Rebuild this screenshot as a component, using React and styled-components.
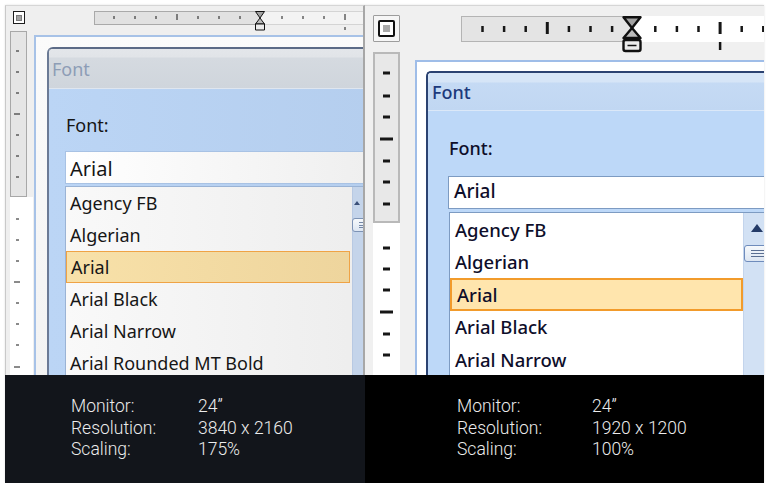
import React from "react";
import styled, { createGlobalStyle } from "styled-components";

const GlobalStyle = createGlobalStyle`
  html, body {
    margin: 0;
    padding: 0;
    background: #ffffff;
  }
  body {
    font-family: "Noto Sans", "Open Sans", "DejaVu Sans", sans-serif;
  }
`;

// two screenshots of the same Word font dialog: 4k @175% and 1920 @100%
const HI = {
  key: "hi",
  panelW: 360,
  borderLeft: "1px solid #c9c9c9",
  borderRight: "2px solid #a7a7a7",
  viewBg: "#efefef",
  padLeft: 4,
  padTop: 5,
  barH: 25,
  cornerCol: 17,
  rulerGap: 1,
  hr: {
    ml: 67, mt: 0, width: 300, height: 14, split: 166,
    first: 20, step: 21, count: 13, skip: 7, tall: [3, 11], below: 11,
    shortY: [5, 8], tallY: [3, 9], belowY: [16, 19], w: 1, tallW: 1,
    hour: { w: 9, y1: 7, y2: 13, r0: 13, r1: 19, sw: 1, bar: false },
    gray: "#e1e1e1", grayStroke: "#a9a9a9", light: "#f3f3f3", lightStroke: "#d4d4d4",
  },
  vr: {
    width: 23, grayW: 17, grayH: 166, height: 360,
    top: [20, 41, 62, 83, 104, 125, 146], topLong: [83],
    bot: [22, 43, 64, 85, 106, 127, 148, 170], botLong: [85, 170],
    short: [6, 9], long: [4, 10], sw: 1,
    gray: "#e5e5e5", grayStroke: "#a8a8a8", bw: 1,
  },
  docMt: 4,
  docBorder: "#a7c2e7",
  docBg: "linear-gradient(180deg, #fbfbfb 0%, #f1f1f1 100%)",
  dlgMl: 11,
  dlgMt: 10,
  caption: { bg: "#12151b", pad: 66, col: 127 },
};

const LO = {
  key: "lo",
  panelW: 399,
  borderLeft: "none",
  borderRight: "none",
  viewBg: "#f0f0f0",
  padLeft: 8,
  padTop: 9,
  barH: 46,
  cornerCol: 27,
  rulerGap: 15,
  hr: {
    ml: 61, mt: 1, width: 320, height: 26, split: 171,
    first: 21.5, step: 21.6, count: 14, skip: 7, tall: [3, 11], below: 11,
    shortY: [10, 16], tallY: [6, 18], belowY: [26, 34], w: 2.5, tallW: 3,
    hour: { w: 17, y1: 12, y2: 22, r0: 24, r1: 35, sw: 2.4, bar: true },
    gray: "#e4e4e4", grayStroke: "#b4b4b4", light: "#ffffff", lightStroke: "#ffffff",
  },
  vr: {
    width: 27, grayW: 27, grayH: 171, height: 360,
    top: [21, 44, 65, 87, 109, 130, 152], topLong: [87],
    bot: [25, 46, 67, 89, 111, 132], botLong: [89],
    short: [10, 17], long: [7, 20], sw: 3,
    gray: "#e8e8e8", grayStroke: "#b9b9b9", bw: 2,
  },
  docMt: 8,
  docBorder: "#9fbde8",
  docBg: "#ffffff",
  dlgMl: 9,
  dlgMt: 9,
  caption: { bg: "#000000", pad: 92, col: 135 },
};

const FONTS = ["Agency FB", "Algerian", "Arial", "Arial Black", "Arial Narrow", "Arial Rounded MT Bold"];

const Frame = styled.div`
  display: flex;
  margin: 5px 0 0 5px;
  width: 759px;
  height: 478px;
  box-shadow: 0 0 2px rgba(0, 0, 0, 0.12);
`;

const Panel = styled.div`
  width: ${(p) => p.$v.panelW}px;
  flex: none;
  display: flex;
  flex-direction: column;
  overflow: hidden;
`;

const Viewport = styled.div`
  flex: 1;
  min-height: 0;
  overflow: hidden;
  background: ${(p) => p.$v.viewBg};
  border-top: 1px solid #d6d6d6;
  border-left: ${(p) => p.$v.borderLeft};
  border-right: ${(p) => p.$v.borderRight};
  padding-left: ${(p) => p.$v.padLeft}px;
`;

const TopBar = styled.div`
  height: ${(p) => p.$v.barH}px;
  box-sizing: border-box;
  padding-top: ${(p) => p.$v.padTop}px;
  display: flex;
  align-items: flex-start;
`;

const CornerCell = styled.div`
  width: ${(p) => p.$v.cornerCol}px;
  flex: none;
  display: flex;
  justify-content: center;
`;

const CornerHi = styled.div`
  width: 12px;
  height: 13px;
  box-sizing: border-box;
  border: 1px solid #1d1d1d;
  background: #ffffff;
  display: grid;
  place-items: center;
`;

const CornerLo = styled.div`
  width: 27px;
  height: 27px;
  box-sizing: border-box;
  border: 1px solid #9d9d9d;
  border-radius: 1px;
  background: #f6f6f6;
  display: grid;
  place-items: center;
`;

const CornerKnob = styled.div`
  width: ${(p) => (p.$lo ? 17 : 6)}px;
  height: ${(p) => (p.$lo ? 17 : 6)}px;
  box-sizing: border-box;
  border: ${(p) => (p.$lo ? "2.5px solid #111" : "1px solid #7a7a7a")};
  border-radius: ${(p) => (p.$lo ? 2 : 0)}px;
  background: ${(p) => (p.$lo ? "#ffffff" : "#a2a2a2")};
  display: grid;
  place-items: center;
`;

const CornerDot = styled.div`
  width: 7px;
  height: 7px;
  background: #a9a9a9;
`;

const RulerSvg = styled.svg`
  display: block;
  flex: none;
  overflow: visible;
  margin-left: ${(p) => p.$ml || 0}px;
  margin-top: ${(p) => p.$mt || 0}px;
`;

const Body = styled.div`
  display: flex;
  align-items: flex-start;
  gap: ${(p) => p.$v.rulerGap}px;
`;

const Doc = styled.div`
  flex: none;
  width: 440px;
  height: 400px;
  margin-top: ${(p) => p.$v.docMt}px;
  border-left: 2px solid ${(p) => p.$v.docBorder};
  border-top: 2px solid ${(p) => p.$v.docBorder};
  background: ${(p) => p.$v.docBg};
  padding: ${(p) => p.$v.dlgMt}px 0 0 ${(p) => p.$v.dlgMl}px;
`;

const Dialog = styled.div`
  width: 420px;
  border-left: 2px solid ${(p) => (p.$lo ? "#2b4271" : "#6b7a95")};
  border-top: 2px solid ${(p) => (p.$lo ? "#2b4271" : "#5c6b87")};
  border-top-left-radius: ${(p) => (p.$lo ? 5 : 6)}px;
  overflow: hidden;
`;

const TitleBar = styled.div`
  height: ${(p) => (p.$lo ? 37 : 39)}px;
  display: flex;
  align-items: center;
  padding-left: ${(p) => (p.$lo ? 4 : 3)}px;
  font-size: 18px;
  color: ${(p) => (p.$lo ? "#1c3a7c" : "#8d9db6")};
  font-weight: ${(p) => (p.$lo ? 500 : 400)};
  border-bottom: 1px solid ${(p) => (p.$lo ? "#dbe8f8" : "#dfe6ef")};
  background: ${(p) =>
    p.$lo
      ? "linear-gradient(180deg, #d6e5f7 0px, #d6e5f7 9px, #c5daf4 10px, #c1d7f2 100%)"
      : "linear-gradient(180deg, #e3e6ea 0px, #e1e4e8 8px, #d5dae0 9px, #cfd5dc 100%)"};
`;

const DialogBody = styled.div`
  height: 300px;
  padding: ${(p) => (p.$lo ? "24px 0 0 20px" : "23px 0 0 16px")};
  background: ${(p) =>
    p.$lo ? "#bdd8f8" : "linear-gradient(90deg, #bbd5f5 0%, #b3ccec 100%)"};
`;

const Label = styled.div`
  height: 26px;
  line-height: 26px;
  font-size: ${(p) => (p.$lo ? 18 : 18)}px;
  font-weight: ${(p) => (p.$lo ? 500 : 400)};
  color: ${(p) => (p.$lo ? "#0e0e2a" : "#161616")};
  padding-left: 1px;
`;

const Input = styled.div`
  margin-top: ${(p) => (p.$lo ? 15 : 13)}px;
  height: 33px;
  width: 360px;
  box-sizing: border-box;
  border: 1px solid ${(p) => (p.$lo ? "#7d9bc2" : "#a8c2e4")};
  background: ${(p) => (p.$lo ? "#ffffff" : "linear-gradient(90deg, #ffffff 0%, #ececec 100%)")};
  padding: ${(p) => (p.$lo ? "0 0 0 5px" : "2px 0 0 4px")};
  line-height: 29px;
  font-size: ${(p) => (p.$lo ? 19 : 20)}px;
  font-weight: ${(p) => (p.$lo ? 500 : 400)};
  color: ${(p) => (p.$lo ? "#0e0e2a" : "#161616")};
`;

const List = styled.div`
  margin-top: ${(p) => (p.$lo ? 3 : 2)}px;
  margin-left: ${(p) => (p.$lo ? 1 : 0)}px;
  display: flex;
  width: 360px;
  border: 1px solid ${(p) => (p.$lo ? "#7d9bc2" : "#9ab3d5")};
  background: ${(p) => (p.$lo ? "#ffffff" : "linear-gradient(90deg, #f9f9f9 0%, #ebebeb 100%)")};
`;

const Items = styled.div`
  width: ${(p) => (p.$lo ? 293 : 286)}px;
  flex: none;
`;

const Item = styled.div`
  height: ${(p) => (p.$lo ? 32.5 : 32)}px;
  box-sizing: border-box;
  margin-right: ${(p) => (p.$lo ? 0 : 2)}px;
  padding-left: ${(p) => (p.$lo ? 5 : 4)}px;
  display: flex;
  align-items: center;
  font-size: ${(p) => (p.$lo ? 18.5 : 18)}px;
  font-weight: ${(p) => (p.$lo ? 500 : 400)};
  color: ${(p) => (p.$lo ? "#0e0e2a" : "#161616")};
  white-space: nowrap;
  border: ${(p) =>
    p.$sel ? (p.$lo ? "2px solid #f29b2b" : "1px solid #efa345") : "none"};
  background: ${(p) =>
    p.$sel
      ? p.$lo
        ? "#ffe5ad"
        : "linear-gradient(90deg, #f8e1a9 0%, #eed59d 100%)"
      : "transparent"};
`;

const Scroll = styled.div`
  flex: 1;
  background: ${(p) => (p.$lo ? "#d2e1f4" : "#c4d4ea")};
  border-left: 1px solid ${(p) => (p.$lo ? "#c3d4ec" : "#b8c9e2")};
  display: flex;
  flex-direction: column;
  padding-top: ${(p) => (p.$lo ? 11 : 14)}px;
`;

const UpArrow = styled.div`
  width: 0;
  height: 0;
  margin-left: ${(p) => (p.$lo ? 7 : 1)}px;
  border-left: ${(p) => (p.$lo ? 6 : 3)}px solid transparent;
  border-right: ${(p) => (p.$lo ? 6 : 3)}px solid transparent;
  border-bottom: ${(p) => (p.$lo ? 8 : 4)}px solid ${(p) => (p.$lo ? "#243b68" : "#3a4f78")};
`;

const Thumb = styled.div`
  margin-top: 13px;
  margin-left: ${(p) => (p.$lo ? 0 : -1)}px;
  height: ${(p) => (p.$lo ? 17 : 14)}px;
  box-sizing: border-box;
  border: 1px solid ${(p) => (p.$lo ? "#6f8cbc" : "#7d93b5")};
  border-radius: 3px;
  background: linear-gradient(180deg, #f6f9fc 0%, #dde6f2 100%);
  display: flex;
  flex-direction: column;
  justify-content: center;
  gap: ${(p) => (p.$lo ? 2 : 1.5)}px;
  padding-left: 6px;
`;

const Grip = styled.div`
  height: 1px;
  background: ${(p) => (p.$lo ? "#5b6f92" : "#7487a6")};
`;

const Caption = styled.div`
  height: 108px;
  flex: none;
  box-sizing: border-box;
  background: ${(p) => p.$v.caption.bg};
  padding: 21px 0 0 ${(p) => p.$v.caption.pad}px;
  display: grid;
  grid-template-columns: ${(p) => p.$v.caption.col}px auto;
  align-content: start;
  font-family: Roboto, "Noto Sans", sans-serif;
  font-weight: 300;
  font-size: 17.5px;
  line-height: 21.5px;
  color: #ececec;
`;

function HRuler({ s }) {
  const marks = [];
  for (let i = 0; i < s.count; i++) {
    if (i === s.skip) continue;
    const x = s.first + s.step * i;
    const tall = s.tall.includes(i);
    const y = tall ? s.tallY : s.shortY;
    marks.push(
      <line key={i} x1={x} x2={x} y1={y[0]} y2={y[1]} stroke="#161616" strokeWidth={tall ? s.tallW : s.w} />
    );
    if (i === s.below) {
      marks.push(
        <line key={"b" + i} x1={x} x2={x} y1={s.belowY[0]} y2={s.belowY[1]} stroke="#161616" strokeWidth={s.w} />
      );
    }
  }
  const h = s.hour;
  const cx = s.split;
  const l = cx - h.w / 2;
  const r = cx + h.w / 2;
  return (
    <RulerSvg width={s.width} height={s.height} $ml={s.ml} $mt={s.mt}>
      <rect x={s.split} y={0.5} width={s.width - s.split} height={s.height - 1} fill={s.light} stroke={s.lightStroke} />
      <rect x={0.5} y={0.5} width={s.split} height={s.height - 1} fill={s.gray} stroke={s.grayStroke} />
      {marks}
      <g stroke="#111" strokeWidth={h.sw} strokeLinejoin="round">
        <path d={`M${l} ${h.sw / 2} L${r} ${h.sw / 2} L${cx} ${h.y1} Z`} fill="#a3a3a3" />
        <path d={`M${cx} ${h.y1} L${r} ${h.y2} L${l} ${h.y2} Z`} fill="#bcbcbc" />
        <rect x={l} y={h.r0} width={h.w} height={h.r1 - h.r0} rx={h.bar ? 2 : 0} fill="#ececec" />
        {h.bar && <line x1={l + 4} x2={r - 4} y1={(h.r0 + h.r1) / 2} y2={(h.r0 + h.r1) / 2} strokeWidth={1.5} />}
      </g>
    </RulerSvg>
  );
}

function VRuler({ s }) {
  const dash = (y, long, off) => {
    const x = long ? s.long : s.short;
    return <line key={off + "-" + y} x1={x[0]} x2={x[1]} y1={off + y} y2={off + y} stroke="#161616" strokeWidth={s.sw} />;
  };
  return (
    <RulerSvg width={s.width} height={s.height}>
      <rect x={0} y={s.grayH} width={s.width} height={s.height - s.grayH} fill="#ffffff" />
      <rect
        x={s.bw / 2}
        y={s.bw / 2}
        width={s.grayW - s.bw}
        height={s.grayH - s.bw}
        fill={s.gray}
        stroke={s.grayStroke}
        strokeWidth={s.bw}
      />
      {s.top.map((y) => dash(y, s.topLong.includes(y), 0))}
      {s.bot.map((y) => dash(y, s.botLong.includes(y), s.grayH))}
    </RulerSvg>
  );
}

function Screen({ v, items, info }) {
  const lo = v.key === "lo";
  return (
    <Panel $v={v}>
      <Viewport $v={v}>
        <TopBar $v={v}>
          <CornerCell $v={v}>
            {lo ? (
              <CornerLo>
                <CornerKnob $lo>
                  <CornerDot />
                </CornerKnob>
              </CornerLo>
            ) : (
              <CornerHi>
                <CornerKnob />
              </CornerHi>
            )}
          </CornerCell>
          <HRuler s={v.hr} />
        </TopBar>
        <Body $v={v}>
          <VRuler s={v.vr} />
          <Doc $v={v}>
            <Dialog $lo={lo}>
              <TitleBar $lo={lo}>Font</TitleBar>
              <DialogBody $lo={lo}>
                <Label $lo={lo}>Font:</Label>
                <Input $lo={lo}>Arial</Input>
                <List $lo={lo}>
                  <Items $lo={lo}>
                    {items.map((f) => (
                      <Item key={f} $lo={lo} $sel={f === "Arial"}>
                        {f}
                      </Item>
                    ))}
                  </Items>
                  <Scroll $lo={lo}>
                    <UpArrow $lo={lo} />
                    <Thumb $lo={lo}>
                      <Grip $lo={lo} />
                      <Grip $lo={lo} />
                      <Grip $lo={lo} />
                    </Thumb>
                  </Scroll>
                </List>
              </DialogBody>
            </Dialog>
          </Doc>
        </Body>
      </Viewport>
      <Caption $v={v}>
        <span>Monitor:</span>
        <span>24”</span>
        <span>Resolution:</span>
        <span>{info.res}</span>
        <span>Scaling:</span>
        <span>{info.scale}</span>
      </Caption>
    </Panel>
  );
}

export default function App() {
  return (
    <>
      <GlobalStyle />
      <Frame>
        <Screen v={HI} items={FONTS} info={{ res: "3840 x 2160", scale: "175%" }} />
        <Screen v={LO} items={FONTS.slice(0, 5)} info={{ res: "1920 x 1200", scale: "100%" }} />
      </Frame>
    </>
  );
}
